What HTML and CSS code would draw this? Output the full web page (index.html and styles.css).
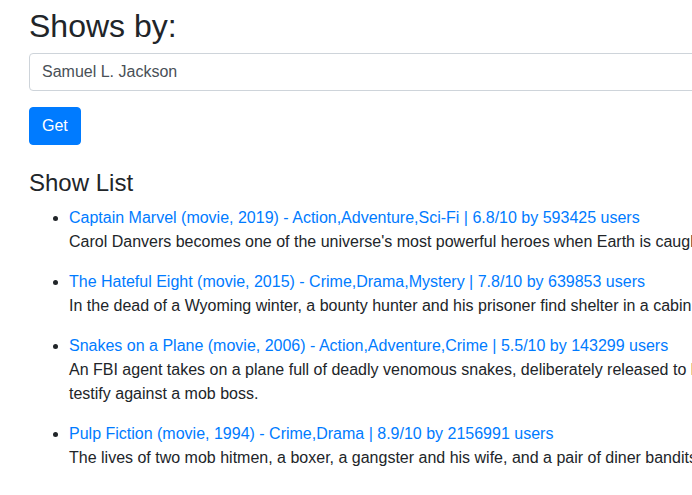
FILE: index.html
```html
<!DOCTYPE html>
<html lang="en">
<head>
<meta charset="utf-8">
<title>Shows by</title>
<link rel="stylesheet" href="styles.css">
</head>
<body>
<div class="container">
  <h2 class="title">Shows by:</h2>
  <form class="search">
    <div class="form-group">
      <input class="form-control" type="text" value="Samuel L. Jackson">
    </div>
    <button class="btn" type="button">Get</button>
  </form>
  <h4 class="subtitle">Show List</h4>
  <ul class="shows">
    <li>
      <a href="#">Captain Marvel (movie, 2019) - Action,Adventure,Sci-Fi | 6.8/10 by 593425 users</a>
      <p>Carol Danvers becomes one of the universe's most powerful heroes when Earth is caught in the middle of a galactic war between two alien races.</p>
    </li>
    <li>
      <a href="#">The Hateful Eight (movie, 2015) - Crime,Drama,Mystery | 7.8/10 by 639853 users</a>
      <p>In the dead of a Wyoming winter, a bounty hunter and his prisoner find shelter in a cabin currently inhabited by a collection of nefarious characters.</p>
    </li>
    <li>
      <a href="#">Snakes on a Plane (movie, 2006) - Action,Adventure,Crime | 5.5/10 by 143299 users</a>
      <p>An FBI agent takes on a plane full of deadly venomous snakes, deliberately released to kill a witness being flown from Honolulu to Los Angeles to testify against a mob boss.</p>
    </li>
    <li>
      <a href="#">Pulp Fiction (movie, 1994) - Crime,Drama | 8.9/10 by 2156991 users</a>
      <p>The lives of two mob hitmen, a boxer, a gangster and his wife, and a pair of diner bandits intertwine in four tales of violence and redemption.</p>
    </li>
  </ul>
</div>
</body>
</html>
```
FILE: styles.css
```css
html, body {
  margin: 0;
  overflow: hidden;
}
body {
  font-family: "Liberation Sans", Arial, sans-serif;
  font-size: 16px;
  line-height: 1.5;
  color: #212529;
  background: #fff;
}
.container {
  width: 1110px;
  padding: 7px 0 0 29px;
}
.title {
  margin: 0 0 8px;
  font-size: 32px;
  font-weight: 500;
  line-height: 1.2;
}
.search {
  margin: 0 0 24px;
}
.form-group {
  margin-bottom: 16px;
}
.form-control {
  display: block;
  box-sizing: border-box;
  width: 100%;
  height: 38px;
  padding: 6px 12px;
  font-family: inherit;
  font-size: 16px;
  line-height: 1.5;
  color: #495057;
  background: #fff;
  border: 1px solid #ced4da;
  border-radius: 4px;
  margin: 0;
}
.btn {
  display: inline-block;
  box-sizing: border-box;
  height: 38px;
  padding: 6px 12px;
  font-family: inherit;
  font-size: 16px;
  line-height: 1.5;
  color: #fff;
  background: #007bff;
  border: 1px solid #007bff;
  border-radius: 4px;
  margin: 0;
  vertical-align: top;
}
.subtitle {
  margin: 0 0 8px;
  font-size: 24px;
  font-weight: 500;
  line-height: 1.2;
}
.shows {
  margin: 0;
  padding-left: 40px;
}
.shows a {
  color: #007bff;
  text-decoration: none;
}
.shows p {
  margin: 0 0 16px;
}
```
